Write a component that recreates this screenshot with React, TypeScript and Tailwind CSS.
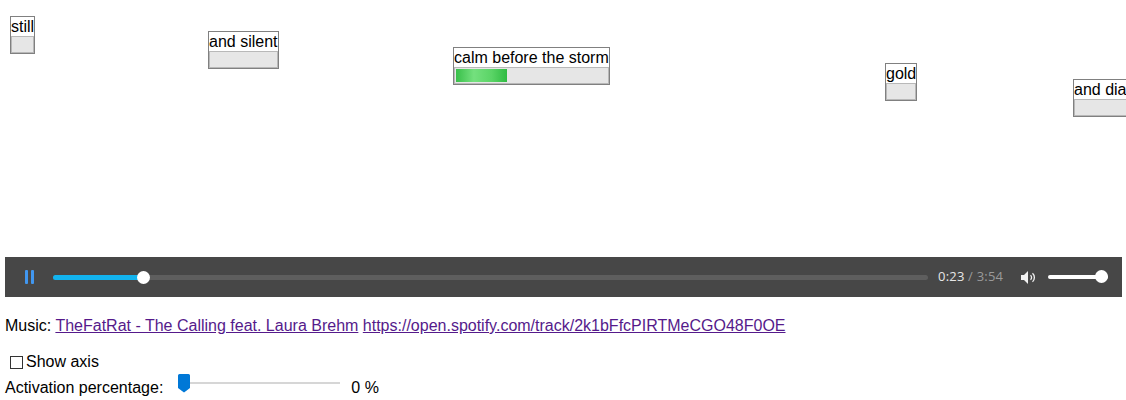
import React from "react";

interface WordProps {
  text: string;
  left: number;
  top: number;
  value: number;
}

const words: WordProps[] = [
  { text: "still", left: 10, top: 16, value: 0 },
  { text: "and silent", left: 208, top: 31, value: 0 },
  { text: "calm before the storm", left: 453, top: 47, value: 34 },
  { text: "gold", left: 885, top: 63, value: 0 },
  { text: "and diamonds", left: 1073, top: 79, value: 0 },
];

function Word({ text, left, top, value }: WordProps) {
  return (
    <div
      className="absolute flex w-max flex-col border border-[#808080] bg-white"
      style={{ left, top }}
    >
      <span className="whitespace-nowrap pt-px leading-[18px]">{text}</span>
      <div className="h-[17px] border border-[#b8b8b8] bg-[#e6e6e6] p-px">
        {value > 0 && (
          <div
            className="h-full bg-[linear-gradient(to_right,#38bf49,#74e07e_35%,#5ad466_70%,#2fbb42)]"
            style={{ width: `${value}%` }}
          />
        )}
      </div>
    </div>
  );
}

function Player() {
  return (
    <div className="ml-[5px] flex h-[40px] w-[1117px] items-center bg-[#474747] pr-[14px] font-['Open_Sans',sans-serif] text-[13px]">
      <div className="flex w-[48px] shrink-0 justify-center">
        <div className="flex gap-[3px]">
          <span className="block h-[14px] w-[3px] rounded-[1px] bg-[#4197f0]" />
          <span className="block h-[14px] w-[3px] rounded-[1px] bg-[#4197f0]" />
        </div>
      </div>
      <div className="relative h-[5px] flex-1 rounded-full bg-[#5e5e5e]">
        <div className="absolute left-0 top-0 h-full w-[91px] rounded-full bg-[#12b3ee]" />
        <div className="absolute left-[84px] top-[-4px] h-[13px] w-[13px] rounded-full bg-white" />
      </div>
      <div className="ml-[10px] w-[66px] shrink-0 whitespace-nowrap tracking-[0.2px]">
        <span className="text-[#e6e6e6]">0:23</span>
        <span className="text-[#9a9a9a]"> / 3:54</span>
      </div>
      <svg className="ml-[17px] shrink-0" width="16" height="13" viewBox="0 0 16 13">
        <path d="M0 4h3l4-4v13l-4-4H0z" fill="#f2f2f2" />
        <path d="M9.5 4.2a3 3 0 0 1 0 4.6" stroke="#f2f2f2" strokeWidth="1.3" fill="none" />
        <path d="M11.5 2.3a5.6 5.6 0 0 1 0 8.4" stroke="#f2f2f2" strokeWidth="1.3" fill="none" />
      </svg>
      <div className="relative ml-[11px] h-[4px] w-[60px] shrink-0 rounded-full bg-white">
        <div className="absolute left-[47px] top-[-5px] h-[13px] w-[13px] rounded-full bg-white" />
      </div>
    </div>
  );
}

export default function App() {
  return (
    <div className="h-[400px] w-[1126px] overflow-hidden bg-white font-['Liberation_Sans',Arial,sans-serif] text-[16px] text-black">
      <div className="relative h-[257px] overflow-hidden">
        {words.map((w) => (
          <Word key={w.text} {...w} />
        ))}
      </div>
      <Player />
      <p className="mt-[20px] px-[5px] leading-[18px] whitespace-nowrap">
        Music:{" "}
        <a href="#" className="text-[#551a8b] underline">
          TheFatRat - The Calling feat. Laura Brehm
        </a>{" "}
        <a href="#" className="text-[#551a8b] underline">
          https://open.spotify.com/track/2k1bFfcPIRTMeCGO48F0OE
        </a>
      </p>
      <label className="mt-[18px] flex h-[18px] items-center px-[5px] leading-[18px]">
        <span className="ml-[5px] mr-[3px] block h-[13px] w-[13px] border border-[#333] bg-white" />
        Show axis
      </label>
      <div className="mt-[3px] flex h-[23px] items-start px-[5px]">
        <span className="mt-[5px] leading-[18px]">Activation percentage:</span>
        <div className="relative ml-[15px] h-[19px] w-[162px]">
          <div className="absolute left-0 right-0 top-[8px] h-[2px] bg-[#d6d6d6]" />
          <svg className="absolute left-0 top-0" width="12" height="19" viewBox="0 0 12 19">
            <path d="M1.5 0h9a1.5 1.5 0 0 1 1.5 1.5V14l-6 4.5L0 14V1.5A1.5 1.5 0 0 1 1.5 0z" fill="#0078d7" />
          </svg>
        </div>
        <span className="ml-[11px] mt-[5px] leading-[18px]">0 %</span>
      </div>
    </div>
  );
}
